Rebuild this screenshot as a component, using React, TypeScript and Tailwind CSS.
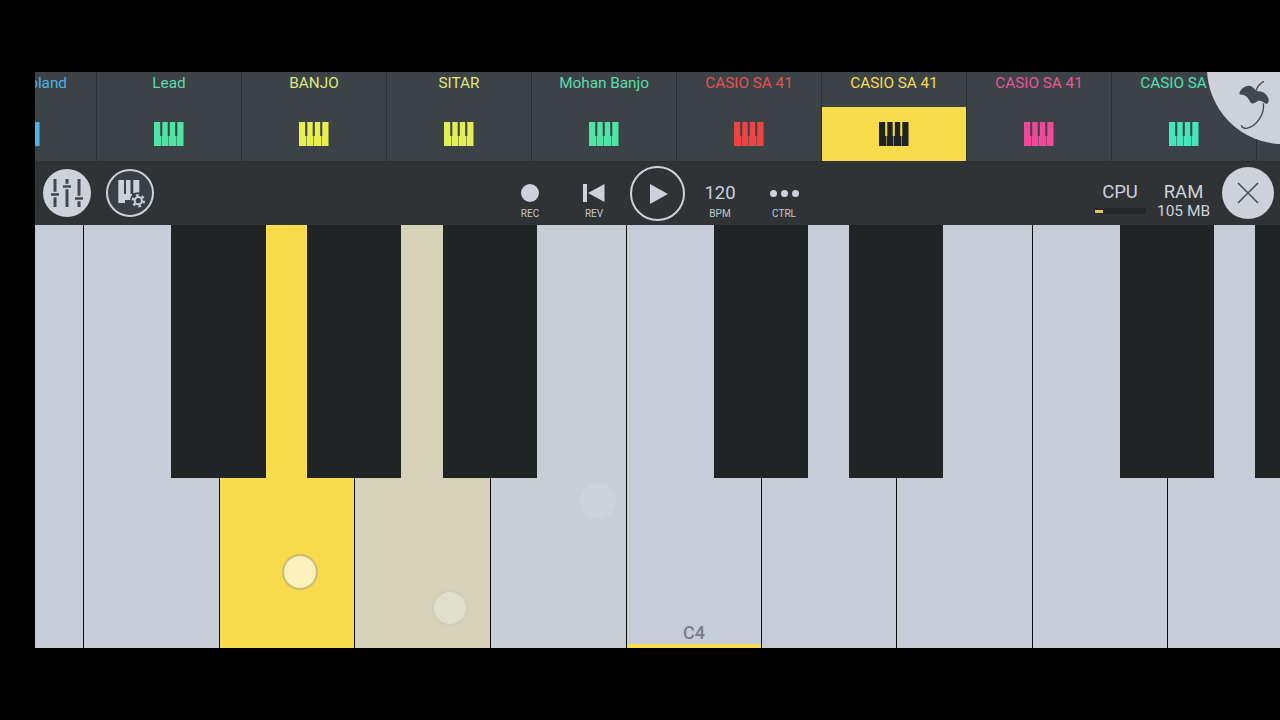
const channels = [
  { name: "Lead", label: "text-[#5ddcaa]", icon: "text-[#4fe3a5]" },
  { name: "BANJO", label: "text-[#dfe67f]", icon: "text-[#e9ef4f]" },
  { name: "SITAR", label: "text-[#dfe67f]", icon: "text-[#e2ee55]" },
  { name: "Mohan Banjo", label: "text-[#5ddcaa]", icon: "text-[#4fe3a5]" },
  { name: "CASIO SA 41", label: "text-[#e4504f]", icon: "text-[#ef4444]" },
  { name: "CASIO SA 41", label: "text-[#f5dc58]", icon: "text-[#1f2322]", active: true },
  { name: "CASIO SA 41", label: "text-[#e85598]", icon: "text-[#f2489c]" },
  { name: "CASIO SA 41", label: "text-[#52e0b4]", icon: "text-[#45e6bb]" },
];

// white keys, left to right. first one is cut by the screen edge
const whiteKeys = [
  { w: "w-[49px]", bg: "bg-[#c6cdd9]" },
  { w: "w-[136px]", bg: "bg-[#c6cdd9]" },
  { w: "w-[135px]", bg: "bg-[#f8dc4b]" },
  { w: "w-[136px]", bg: "bg-[#d5d2b7]" },
  { w: "w-[136px]", bg: "bg-[#c7cfd4]" },
  { w: "w-[135px]", bg: "bg-[#c6cdd9]", note: "C4" },
  { w: "w-[135px]", bg: "bg-[#c6cdd9]" },
  { w: "w-[136px]", bg: "bg-[#c6cdd9]" },
  { w: "w-[135px]", bg: "bg-[#c6cdd9]" },
  { w: "w-[135px]", bg: "bg-[#c6cdd9]" },
];

const blackKeys = [
  "left-[136px] w-[95px]",
  "left-[272px] w-[94px]",
  "left-[408px] w-[94px]",
  "left-[679px] w-[94px]",
  "left-[814px] w-[94px]",
  "left-[1085px] w-[94px]",
  "left-[1220px] w-[25px]",
];

const KEYS_PATH =
  "M0 0H6.200V14H7V24H0ZM8.300 0H13.700V14H14.500V24H7.500V14H8.300ZM15.800 0H21.200V14H22V24H15V14H15.800ZM23.300 0H29.500V24H22.500V14H23.300Z";

const PianoIcon = ({ className }: { className: string }) => (
  <svg viewBox="0 0 30 24" className={`w-[30px] h-[24px] shrink-0 ${className}`} fill="currentColor">
    <path d={KEYS_PATH} />
  </svg>
);

const ToolColumn = ({ label, children }: { label: string; children: React.ReactNode }) => (
  <div className="w-[64px] flex flex-col items-center pt-[19px]">
    <div className="h-[24px] flex items-center justify-center">{children}</div>
    <div className="mt-[3px] text-[10px] leading-[12px] text-[#c3c8d0]">{label}</div>
  </div>
);

const Touch = ({ className }: { className: string }) => (
  <div className={`absolute w-[36px] h-[36px] rounded-full border-2 ${className}`} />
);

export default function App() {
  return (
    <div className="w-[1280px] h-[720px] bg-black overflow-hidden pt-[72px] pl-[35px] font-['Roboto',sans-serif]">
      <div className="relative w-[1245px] h-[576px] overflow-hidden flex flex-col">
        {/* channels */}
        <div className="h-[90px] shrink-0 flex bg-[#3b4347] border-b border-[#2a2e31]">
          <div className="w-[62px] shrink-0 overflow-hidden border-r border-[#2a2e31] flex flex-col items-end">
            <div className="h-[35px] pt-px pr-[29px] text-[15.3px] leading-[20px] text-[#4fb2e6] whitespace-nowrap">
              Roland
            </div>
            <div className="flex-1 flex items-center pr-[56px]">
              <PianoIcon className="text-[#4cb4ec]" />
            </div>
          </div>
          {channels.map((c, i) => (
            <div key={i} className="w-[145px] shrink-0 flex flex-col border-r border-[#2a2e31]">
              <div className={`h-[35px] pt-px text-center text-[15.3px] leading-[20px] whitespace-nowrap ${c.label}`}>
                {c.name}
              </div>
              <div className={`flex-1 flex items-center justify-center ${c.active ? "bg-[#f8dc4b]" : ""}`}>
                <PianoIcon className={c.icon} />
              </div>
            </div>
          ))}
        </div>

        {/* toolbar */}
        <div className="h-[63px] shrink-0 flex bg-[#2f3336] text-[#ccd1da]">
          <div className="ml-[8px] mt-[7px] w-[48px] h-[48px] rounded-full bg-[#ccd1da]">
            <svg viewBox="0 0 48 48" className="w-[48px] h-[48px]">
              <path d="M12 10V38M24 10V38M36 10V38" stroke="#43484c" strokeWidth="3" />
              <path d="M8 25.500H16M20 17.500H28M32 29.500H40" stroke="#ccd1da" strokeWidth="5.500" />
              <path d="M8 25.500H16M20 17.500H28M32 29.500H40" stroke="#43484c" strokeWidth="2.500" />
            </svg>
          </div>
          <div className="ml-[15px] mt-[7px] w-[48px] h-[48px] rounded-full bg-[#3a4145] border-2 border-[#ccd1da]">
            <svg viewBox="0 0 44 44" className="w-[44px] h-[44px]">
              <path
                d="M10.300 9H16V23H17V32H10.300ZM18 9H22.500V23H24V29H16.900V23H18ZM25.300 9H31.300V22H25.300Z"
                fill="#ccd1da"
              />
              <circle cx="30.300" cy="29.700" r="8.500" fill="#3a4145" />
              <circle cx="30.300" cy="29.700" r="3.600" fill="none" stroke="#ccd1da" strokeWidth="2" />
              <circle
                cx="30.300"
                cy="29.700"
                r="5.600"
                fill="none"
                stroke="#ccd1da"
                strokeWidth="2.200"
                strokeDasharray="2.600 3.260"
              />
            </svg>
          </div>

          <div className="ml-[344px] flex">
            <ToolColumn label="REC">
              <div className="w-[18px] h-[18px] rounded-full bg-[#ccd1da]" />
            </ToolColumn>
            <ToolColumn label="REV">
              <svg viewBox="0 0 22 18" className="w-[22px] h-[18px]" fill="#ccd1da">
                <path d="M0 0H4V18H0ZM21.500 0V18L5 9Z" />
              </svg>
            </ToolColumn>
            <div className="ml-[4px] mt-[4px] w-[55px] h-[55px] rounded-full border-2 border-[#ccd1da] flex items-center justify-center">
              <svg viewBox="0 0 18 20" className="w-[18px] h-[20px] ml-[3px]" fill="#ccd1da">
                <path d="M0 0L18 10L0 20Z" />
              </svg>
            </div>
            <div className="ml-[3px]">
              <ToolColumn label="BPM">
                <span className="text-[18.5px] leading-[24px]">120</span>
              </ToolColumn>
            </div>
            <ToolColumn label="CTRL">
              <div className="flex gap-[4px]">
                <div className="w-[7px] h-[7px] rounded-full bg-[#ccd1da]" />
                <div className="w-[7px] h-[7px] rounded-full bg-[#ccd1da]" />
                <div className="w-[7px] h-[7px] rounded-full bg-[#ccd1da]" />
              </div>
            </ToolColumn>
          </div>

          <div className="ml-[278px] w-[52px] flex flex-col items-center pt-[19px]">
            <div className="text-[18.5px] leading-[22px]">CPU</div>
            <div className="mt-[5px] w-[52px] h-[6px] bg-[#25292b] flex items-center">
              <div className="ml-px w-[8px] h-[3px] bg-[#e6c65a]" />
            </div>
          </div>
          <div className="ml-[11px] w-[53px] flex flex-col items-center pt-[19px]">
            <div className="text-[18.5px] leading-[22px]">RAM</div>
            <div className="text-[15.5px] leading-[16px] whitespace-nowrap">105 MB</div>
          </div>
          <div className="ml-[12px] mt-[5px] w-[52px] h-[52px] rounded-full bg-[#ccd1da] flex items-center justify-center">
            <svg viewBox="0 0 22 22" className="w-[22px] h-[22px]" stroke="#4a4f54" strokeWidth="1.600">
              <path d="M1 1L21 21M21 1L1 21" />
            </svg>
          </div>
        </div>

        {/* keyboard */}
        <div className="relative flex-1 flex">
          {whiteKeys.map((k, i) => (
            <div
              key={i}
              className={`shrink-0 border-r border-[#0c0f10] flex flex-col items-center justify-end ${k.w} ${k.bg}`}
            >
              {k.note && (
                <>
                  <div className="text-[18px] leading-[20px] font-medium text-[#777d87]">{k.note}</div>
                  <div className="w-full h-[4px] mt-[1px] bg-[#f8dc4b]" />
                </>
              )}
            </div>
          ))}
          {blackKeys.map((pos) => (
            <div key={pos} className={`absolute top-0 h-[253px] bg-[#202425] ${pos}`} />
          ))}
          <Touch className="left-[247px] top-[329px] bg-[#fbf2bd] border-[#cdbb78]" />
          <Touch className="left-[397px] top-[365px] bg-[#dfdfca] border-[#cfcdb6]" />
          <Touch className="left-[545px] top-[258px] bg-[#ccd4da] border-[#cbd3d8]" />
        </div>

        {/* fl logo button */}
        <div className="absolute left-[1172px] top-[-80px] w-[152px] h-[152px] rounded-full bg-[#ccd1da]" />
        <svg viewBox="0 0 240 240" className="absolute left-[1165px] top-[-2px] w-[80px] h-[80px]">
          <path
            d="M118 70C122 58 135 45 150 48C160 50 165 60 172 64C185 62 200 70 205 85C208 95 205 102 198 102C190 95 180 90 172 94C165 100 155 104 150 95C146 85 135 72 120 74Z"
            fill="#43484c"
          />
          <path
            d="M168 62C172 50 180 40 192 34M190 100C195 130 170 170 140 175C132 176 126 172 124 166"
            fill="none"
            stroke="#43484c"
            strokeWidth="4"
          />
        </svg>
      </div>
    </div>
  );
}
